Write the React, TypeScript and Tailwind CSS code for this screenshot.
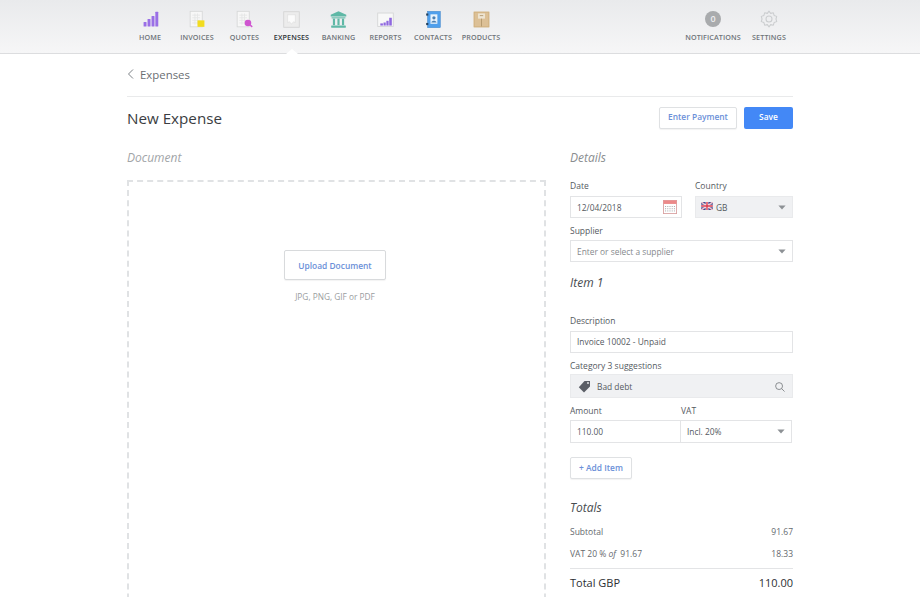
import React from "react";

const Doc = ({ children }: { children?: React.ReactNode }) => (
  <svg width="19" height="19" viewBox="0 0 22 22">
    <rect x="2.5" y="1.5" width="14" height="18" fill="#f7f7f7" stroke="#d6d8d8" />
    <g stroke="#e4e5e6" strokeWidth="1">
      <path d="M5 6h9M5 9h9M5 12h9M5 15h9M8 4v13M11 4v13" />
    </g>
    {children}
  </svg>
);

const icons: Record<string, React.ReactNode> = {
  HOME: (
    <svg width="19" height="19" viewBox="0 0 22 22" fill="#9a6fe6">
      <rect x="3" y="14" width="3.4" height="5" rx="0.6" />
      <rect x="7.6" y="10.5" width="3.4" height="8.5" rx="0.6" />
      <rect x="12.2" y="7" width="3.4" height="12" rx="0.6" />
      <rect x="16.6" y="2" width="3.4" height="17" rx="0.6" />
    </svg>
  ),
  INVOICES: (
    <Doc>
      <rect x="11" y="12" width="8" height="7.5" fill="#f2dc1f" />
    </Doc>
  ),
  QUOTES: (
    <Doc>
      <circle cx="15" cy="15" r="3.8" fill="#cf55d0" />
      <path d="M17.5 17.5l2.5 2" stroke="#cf55d0" strokeWidth="1.6" />
    </Doc>
  ),
  EXPENSES: (
    <svg width="19" height="19" viewBox="0 0 22 22">
      <rect x="2" y="2" width="18" height="18" fill="#ececec" stroke="#d3d4d4" />
      <path d="M6.5 5.5h9v9l-2-.8-2.5 2.3-2.5-2.3-2 .8z" fill="#fbfbfb" stroke="#d8d8d8" strokeWidth="0.6" />
    </svg>
  ),
  BANKING: (
    <svg width="19" height="19" viewBox="0 0 22 22" fill="#5fb8a6">
      <path d="M11 1.5L20 5.5V7.5H2V5.5z" />
      <rect x="3" y="8.5" width="16" height="1.2" />
      <rect x="4.5" y="10" width="2.5" height="7.5" />
      <rect x="9.75" y="10" width="2.5" height="7.5" />
      <rect x="15" y="10" width="2.5" height="7.5" />
      <rect x="2.5" y="18" width="17" height="2.5" rx="0.4" />
    </svg>
  ),
  REPORTS: (
    <svg width="19" height="19" viewBox="0 0 22 22">
      <rect x="2" y="3.5" width="18" height="15.5" fill="#f8f8f8" stroke="#d4d5d5" />
      <g fill="#8f68df">
        <rect x="5" y="15.5" width="3" height="2.5" />
        <rect x="8.7" y="14.5" width="2.6" height="3.5" />
        <rect x="12" y="12.5" width="2.6" height="5.5" />
        <rect x="15.3" y="9" width="3" height="9" />
      </g>
    </svg>
  ),
  CONTACTS: (
    <svg width="19" height="19" viewBox="0 0 22 22">
      <rect x="4" y="1.5" width="15" height="19" fill="#4f9fec" stroke="#3a7fc4" strokeWidth="0.5" />
      <rect x="2.5" y="4" width="2.5" height="2.5" fill="#24405c" />
      <rect x="2.5" y="15" width="2.5" height="2.5" fill="#24405c" />
      <rect x="7.5" y="5" width="8" height="11" fill="#e8f2fb" />
      <circle cx="11.5" cy="9" r="1.9" fill="#4a7fb2" />
      <path d="M8.5 14.5c.4-2.6 5.6-2.6 6 0z" fill="#4a7fb2" />
    </svg>
  ),
  PRODUCTS: (
    <svg width="19" height="19" viewBox="0 0 22 22">
      <rect x="2" y="2" width="18" height="18" fill="#dcc096" />
      <rect x="2.5" y="2.5" width="17" height="17" fill="none" stroke="#cfb07e" />
      <rect x="7" y="4" width="8" height="6" fill="#eee5d3" />
      <path d="M9 6.5h4M11 10v9" stroke="#b0946a" strokeWidth="1" />
    </svg>
  ),
};

const NavItem = ({ label, active, className }: { label: string; active?: boolean; className: string }) => (
  <div className={`relative flex flex-col items-center h-full pt-[8px] ${className}`}>
    <div className="h-[22px] flex items-center justify-center">{icons[label]}</div>
    <div
      className={`mt-[2px] text-[7.2px] leading-[11px] font-semibold tracking-[0.1px] whitespace-nowrap ${
        active ? "text-[#2f3338]" : "text-[#6f7479]"
      }`}
    >
      {label}
    </div>
    {active && (
      <div className="absolute bottom-[-1px] left-1/2 -ml-[6px] w-0 h-0 border-l-[6px] border-r-[6px] border-b-[5px] border-l-transparent border-r-transparent border-b-white" />
    )}
  </div>
);

const Caret = () => (
  <svg width="8" height="5" viewBox="0 0 10 6" className="shrink-0">
    <path d="M0.5 0.5h9L5 5.5z" fill="#8d9195" />
  </svg>
);

const Label = ({ children, className = "" }: { children: React.ReactNode; className?: string }) => (
  <div className={`text-[8.5px] leading-[12px] text-[#555a5f] ${className}`}>{children}</div>
);

const Flag = () => (
  <svg width="12" height="8" viewBox="0 0 13 9" className="shrink-0 mt-[-2px]">
    <rect width="13" height="9" fill="#3d4a8f" />
    <path d="M0 0l13 9M13 0L0 9" stroke="#f3c4cc" strokeWidth="1.6" />
    <path d="M6.5 0v9M0 4.5h13" stroke="#fff" strokeWidth="3" />
    <path d="M6.5 0v9M0 4.5h13" stroke="#d8394c" strokeWidth="1.6" />
  </svg>
);

const Calendar = () => (
  <svg width="14" height="14" viewBox="0 0 16 16" className="shrink-0">
    <rect x="0.5" y="0.5" width="15" height="15" fill="#fff" stroke="#d9a0a0" />
    <rect x="0.5" y="0.5" width="15" height="4" fill="#ec8a8a" />
    <g fill="#8c8f92">
      {[7, 9.5, 12].map((y) =>
        [3, 5.5, 8, 10.5, 13].map((x) => <rect key={`${x}-${y}`} x={x - 0.5} y={y} width="1" height="1" />)
      )}
    </g>
  </svg>
);

export default function App() {
  return (
    <div className="h-[597px] overflow-hidden bg-white font-['Open_Sans',sans-serif] text-[#555a5f]">
      <header className="h-[54px] border-b border-[#dcdddf] bg-gradient-to-b from-[#e9eaec] to-[#f6f6f7] flex pl-[127px]">
        <NavItem label="HOME" className="w-[46px]" />
        <NavItem label="INVOICES" className="w-[48px]" />
        <NavItem label="QUOTES" className="w-[47px]" />
        <NavItem label="EXPENSES" active className="w-[47px]" />
        <NavItem label="BANKING" className="w-[47px]" />
        <NavItem label="REPORTS" className="w-[47px]" />
        <NavItem label="CONTACTS" className="w-[48px]" />
        <NavItem label="PRODUCTS" className="w-[48px]" />
        <div className="w-[177px]" />
        <div className="relative flex flex-col items-center w-[62px] pt-[8px]">
          <div className="h-[22px] flex items-center justify-center">
            <div className="w-[16px] h-[16px] rounded-full bg-[#a9abad] text-[#eeeeef] text-[9px] font-semibold leading-[16px] text-center">0</div>
          </div>
          <div className="mt-[2px] text-[7.2px] leading-[11px] font-semibold tracking-[0.1px] text-[#6f7479]">NOTIFICATIONS</div>
        </div>
        <div className="relative flex flex-col items-center w-[50px] pt-[8px]">
          <div className="h-[22px] flex items-center justify-center">
            <svg width="18" height="18" viewBox="0 0 24 24" fill="none" stroke="#cbcdcf" strokeWidth="1.4" strokeLinejoin="round">
              <path d="M12 1.5l2.2 3 3.6-.7 1 3.5 3.5 1.2-1 3.5 1 3.5-3.5 1.2-1 3.5-3.6-.7-2.2 3-2.2-3-3.6.7-1-3.5-3.5-1.2 1-3.5-1-3.5 3.5-1.2 1-3.5 3.6.7z" />
              <circle cx="12" cy="12" r="4" />
            </svg>
          </div>
          <div className="mt-[2px] text-[7.2px] leading-[11px] font-semibold tracking-[0.1px] text-[#6f7479]">SETTINGS</div>
        </div>
      </header>

      <main className="ml-[127px] w-[666px]">
        <div className="h-[43px] border-b border-[#e9eaeb] flex items-center gap-[6px]">
          <svg width="7" height="10" viewBox="0 0 7 10" className="mt-[-2px]">
            <path d="M6 0.5L1.5 5 6 9.5" fill="none" stroke="#7d8186" strokeWidth="1" />
          </svg>
          <span className="text-[11.4px] text-[#6a6e73] mt-[-1px]">Expenses</span>
        </div>

        <div className="h-[43px] pb-[2px] flex items-center justify-between">
          <h1 className="text-[15.2px] leading-[22px] text-[#3a3d42]">New Expense</h1>
          <div className="flex gap-[7px]">
            <button className="w-[78px] h-[22px] bg-white border border-[#dfe1e3] rounded-[2px] shadow-[0_1px_1px_rgba(0,0,0,0.05)] text-[#6b90d8] text-[8.4px] font-semibold">Enter Payment</button>
            <button className="w-[49px] h-[22px] bg-[#4388f6] rounded-[2px] text-white text-[8.4px] font-semibold">Save</button>
          </div>
        </div>

        <div className="flex mt-[8px]">
          <section className="w-[419px]">
            <div className="text-[12px] leading-[20px] italic text-[#a2a5a8]">Document</div>
            <div className="mt-[12px] h-[480px] border-2 border-dashed border-[#e0e2e4] flex flex-col items-center pt-[68px] pr-[3px]">
              <button className="w-[102px] h-[30px] pt-[2px] bg-white border border-[#d8dadc] rounded-[2px] shadow-[0_1px_1px_rgba(0,0,0,0.05)] text-[#6b90d8] text-[8.4px] font-semibold">Upload Document</button>
              <div className="mt-[11px] text-[8.3px] leading-[12px] text-[#9a9da0]">JPG, PNG, GIF or PDF</div>
            </div>
          </section>

          <section className="ml-[24px] w-[223px]">
            <div className="text-[12px] leading-[20px] italic text-[#8a8d90]">Details</div>

            <div className="flex mt-[12px]">
              <div className="w-[112px]">
                <Label>Date</Label>
                <div className="mt-[4px] h-[22px] border border-[#e3e4e6] flex items-center justify-between pl-[6px] pr-[4px] text-[8.4px] text-[#555a5f]">
                  <span className="pt-[2px]">12/04/2018</span>
                  <Calendar />
                </div>
              </div>
              <div className="ml-[13px] w-[98px]">
                <Label>Country</Label>
                <div className="mt-[4px] h-[22px] bg-[#f0f1f3] border border-[#e9eaec] flex items-center pl-[5px] pr-[6px] text-[8.4px] text-[#555a5f]">
                  <Flag />
                  <span className="ml-[3px] flex-1 pt-[2px]">GB</span>
                  <Caret />
                </div>
              </div>
            </div>

            <Label className="mt-[7px]">Supplier</Label>
            <div className="mt-[3px] h-[22px] border border-[#e3e4e6] flex items-center justify-between pl-[6px] pr-[6px] text-[8.4px] text-[#85898d]">
              <span className="pt-[3px]">Enter or select a supplier</span>
              <Caret />
            </div>

            <div className="mt-[11px] pt-[1px] text-[12px] leading-[18px] italic text-[#484c50]">Item 1</div>

            <Label className="mt-[23px]">Description</Label>
            <div className="mt-[4px] h-[22px] border border-[#e3e4e6] flex items-center pl-[6px] text-[8.4px] text-[#555a5f]">Invoice 10002 - Unpaid</div>

            <Label className="mt-[7px]">Category 3 suggestions</Label>
            <div className="mt-[2px] h-[24px] bg-[#f0f1f3] border border-[#e9eaec] flex items-center pl-[7px] pr-[7px] text-[8.4px] text-[#555a5f]">
              <svg width="13" height="13" viewBox="0 0 13 13" className="shrink-0">
                <path d="M6.5 1H12v5.5L6 12.5 0.8 7.2z" fill="#5b5e66" />
                <circle cx="10" cy="3" r="0.9" fill="#f0f1f3" />
              </svg>
              <span className="ml-[6px] flex-1 pt-[3px]">Bad debt</span>
              <svg width="10" height="10" viewBox="0 0 11 11" fill="none" stroke="#74787c" strokeWidth="0.9" className="mt-[1px]">
                <circle cx="4.5" cy="4.5" r="3.8" />
                <path d="M7.3 7.3L10.5 10.5" />
              </svg>
            </div>

            <div className="flex mt-[7px]">
              <Label className="w-[111px]">Amount</Label>
              <Label>VAT</Label>
            </div>
            <div className="flex mt-[3px] w-[222px] h-[23px] border border-[#e3e4e6] text-[8.4px] text-[#555a5f]">
              <div className="w-[110px] border-r border-[#e3e4e6] flex items-center pl-[6px] pt-[2px]">110.00</div>
              <div className="flex-1 flex items-center justify-between pl-[6px] pr-[6px]">
                <span className="pt-[2px]">Incl. 20%</span>
                <Caret />
              </div>
            </div>

            <button className="mt-[14px] block w-[62px] h-[22px] bg-white border border-[#dfe1e3] rounded-[2px] shadow-[0_1px_1px_rgba(0,0,0,0.05)] text-[#6b90d8] text-[8.4px] font-semibold">+ Add Item</button>

            <div className="mt-[20px] text-[12px] leading-[18px] italic text-[#484c50]">Totals</div>

            <div className="mt-[4px] h-[22px] flex items-center justify-between text-[8.5px] text-[#65696e]">
              <span className="pt-[1px]">Subtotal</span>
              <span className="pt-[1px]">91.67</span>
            </div>
            <div className="h-[22px] flex items-center justify-between text-[8.5px] text-[#65696e]">
              <span>VAT 20 % <i>of</i>&nbsp; 91.67</span>
              <span>18.33</span>
            </div>
            <div className="mt-[3px] border-t border-[#e3e4e6] pt-[6px] flex justify-between items-center text-[11px] leading-[16px] font-medium text-[#2c2f33]">
              <span>Total GBP</span>
              <span>110.00</span>
            </div>
          </section>
        </div>
      </main>
    </div>
  );
}
